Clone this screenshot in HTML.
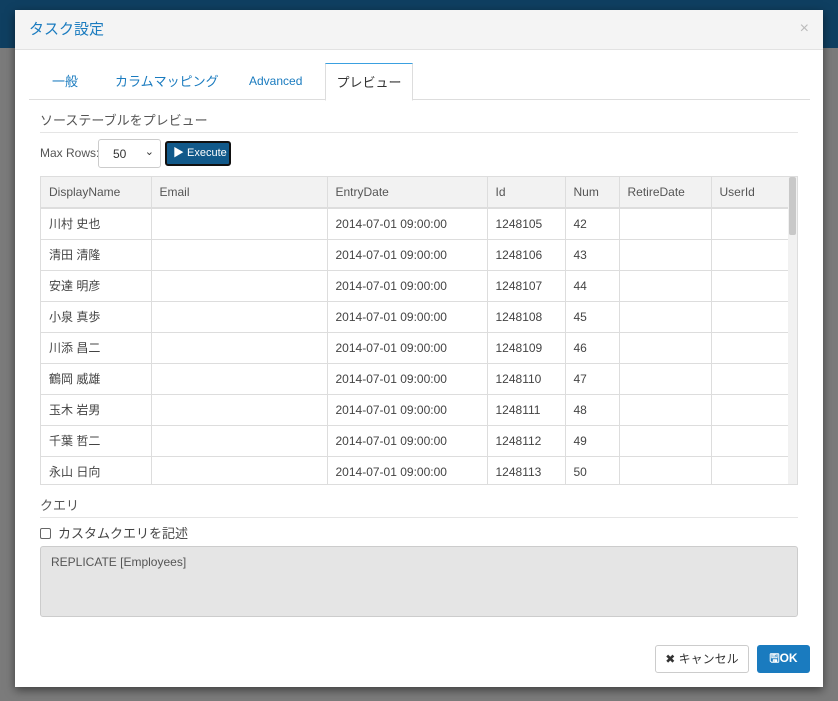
<!DOCTYPE html>
<html><head><meta charset="utf-8"><style>
*{box-sizing:border-box}
body{margin:0;width:838px;height:701px;overflow:hidden;background:#7b7b7b;font-family:"Liberation Sans","Noto Sans CJK JP",sans-serif;font-size:12px;color:#333;position:relative}
.topbar{position:absolute;left:0;top:0;width:838px;height:48px;background:#0f3f61}
.modal{position:absolute;left:15px;top:10px;width:808px;height:677px;background:#fff;box-shadow:0 3px 9px rgba(0,0,0,.5)}
.hdr{height:40px;background:#f4f4f4;border-bottom:1px solid #e2e2e2;padding:8px 14px;font-size:15px;color:#1a7bbf}
.close{position:absolute;right:14px;top:10px;color:#bbb;font-size:16px}
.tabs{position:absolute;left:14px;top:53px;width:781px;height:37px;border-bottom:1px solid #ddd}
.tab{position:absolute;top:0;height:37px;line-height:37px;font-size:13px;color:#1a7bbf}
.tab.act{background:#fff;border:1px solid #ddd;border-top:1px solid #3aa0e0;border-bottom-color:#fff;color:#333;height:38px;text-align:center}
.sec{position:absolute;left:25px;width:758px;border-bottom:1px solid #e5e5e5;font-size:13px;color:#555;padding-bottom:3px}
table{border-collapse:collapse;table-layout:fixed}
.tw{position:absolute;left:25px;top:166px;width:758px;height:309px;overflow:hidden;border:1px solid #ddd}
td,th{border-right:1px solid #ddd;border-bottom:1px solid #ddd;height:31px;padding:0 8px;font-weight:normal;text-align:left;font-size:12px;color:#444;white-space:nowrap}
th{background:#f2f2f2;height:31px;border-bottom:2px solid #ddd;color:#555}
.sb{position:absolute;right:0;top:0;width:9px;height:309px;background:#f1f1f1}
.sb div{width:7px;margin:0 1px;height:58px;background:#c8c8c8;border-radius:2px}
.btn{position:absolute;border-radius:3px;font-size:12px;line-height:26px;height:28px}
</style></head><body>
<div class="topbar"></div>
<div class="modal">
<div class="hdr">タスク設定</div><div class="close">×</div>
<div class="tabs">
<div class="tab" style="left:23px">一般</div>
<div class="tab" style="left:86px">カラムマッピング</div>
<div class="tab" style="left:220px;font-size:12px">Advanced</div>
<div class="tab act" style="left:296px;width:88px">プレビュー</div>
</div>
<div class="sec" style="top:100px">ソーステーブルをプレビュー</div>
<div style="position:absolute;left:25px;top:136px;font-size:12px;color:#555">Max Rows:</div>
<div style="position:absolute;left:83px;top:129px;width:63px;height:29px;border:1px solid #ccc;border-radius:3px;padding:7px 14px;font-size:12px">50<span style="position:absolute;right:6px;top:5px;font-size:11px">&#8964;</span></div>
<div style="position:absolute;left:150px;top:131px;width:66px;height:25px;background:#11598a;border:2px solid #111;border-radius:3px;color:#fff;font-size:11px;line-height:21px;padding-left:6px">▶ Execute</div>
<div class="tw"><table style="width:749px">
<colgroup><col style="width:110px"><col style="width:176px"><col style="width:160px"><col style="width:78px"><col style="width:54px"><col style="width:92px"><col style="width:79px"></colgroup>
<tr><th>DisplayName</th><th>Email</th><th>EntryDate</th><th>Id</th><th>Num</th><th>RetireDate</th><th>UserId</th></tr>
<tr><td>川村 史也</td><td></td><td>2014-07-01 09:00:00</td><td>1248105</td><td>42</td><td></td><td></td></tr>
<tr><td>清田 清隆</td><td></td><td>2014-07-01 09:00:00</td><td>1248106</td><td>43</td><td></td><td></td></tr>
<tr><td>安達 明彦</td><td></td><td>2014-07-01 09:00:00</td><td>1248107</td><td>44</td><td></td><td></td></tr>
<tr><td>小泉 真歩</td><td></td><td>2014-07-01 09:00:00</td><td>1248108</td><td>45</td><td></td><td></td></tr>
<tr><td>川添 昌二</td><td></td><td>2014-07-01 09:00:00</td><td>1248109</td><td>46</td><td></td><td></td></tr>
<tr><td>鶴岡 威雄</td><td></td><td>2014-07-01 09:00:00</td><td>1248110</td><td>47</td><td></td><td></td></tr>
<tr><td>玉木 岩男</td><td></td><td>2014-07-01 09:00:00</td><td>1248111</td><td>48</td><td></td><td></td></tr>
<tr><td>千葉 哲二</td><td></td><td>2014-07-01 09:00:00</td><td>1248112</td><td>49</td><td></td><td></td></tr>
<tr><td>永山 日向</td><td></td><td>2014-07-01 09:00:00</td><td>1248113</td><td>50</td><td></td><td></td></tr>
</table><div class="sb"><div></div></div></div>
<div class="sec" style="top:485px">クエリ</div>
<div style="position:absolute;left:25px;top:513px;font-size:13px;color:#444"><span style="display:inline-block;width:11px;height:11px;border:1px solid #666;border-radius:2px;vertical-align:-1px;margin-right:7px"></span>カスタムクエリを記述</div>
<div style="position:absolute;left:25px;top:536px;width:758px;height:71px;background:#e5e5e5;border:1px solid #ccc;border-radius:3px;padding:8px 10px;font-size:12px;color:#555">REPLICATE [Employees]</div>
<div class="btn" style="left:640px;top:635px;width:94px;border:1px solid #ccc;background:#fff;text-align:center;color:#333">✖ キャンセル</div>
<div class="btn" style="left:742px;top:635px;width:53px;background:#1a7bbf;color:#fff;text-align:center;font-weight:bold">🖫OK</div>
</div>
</body></html>
